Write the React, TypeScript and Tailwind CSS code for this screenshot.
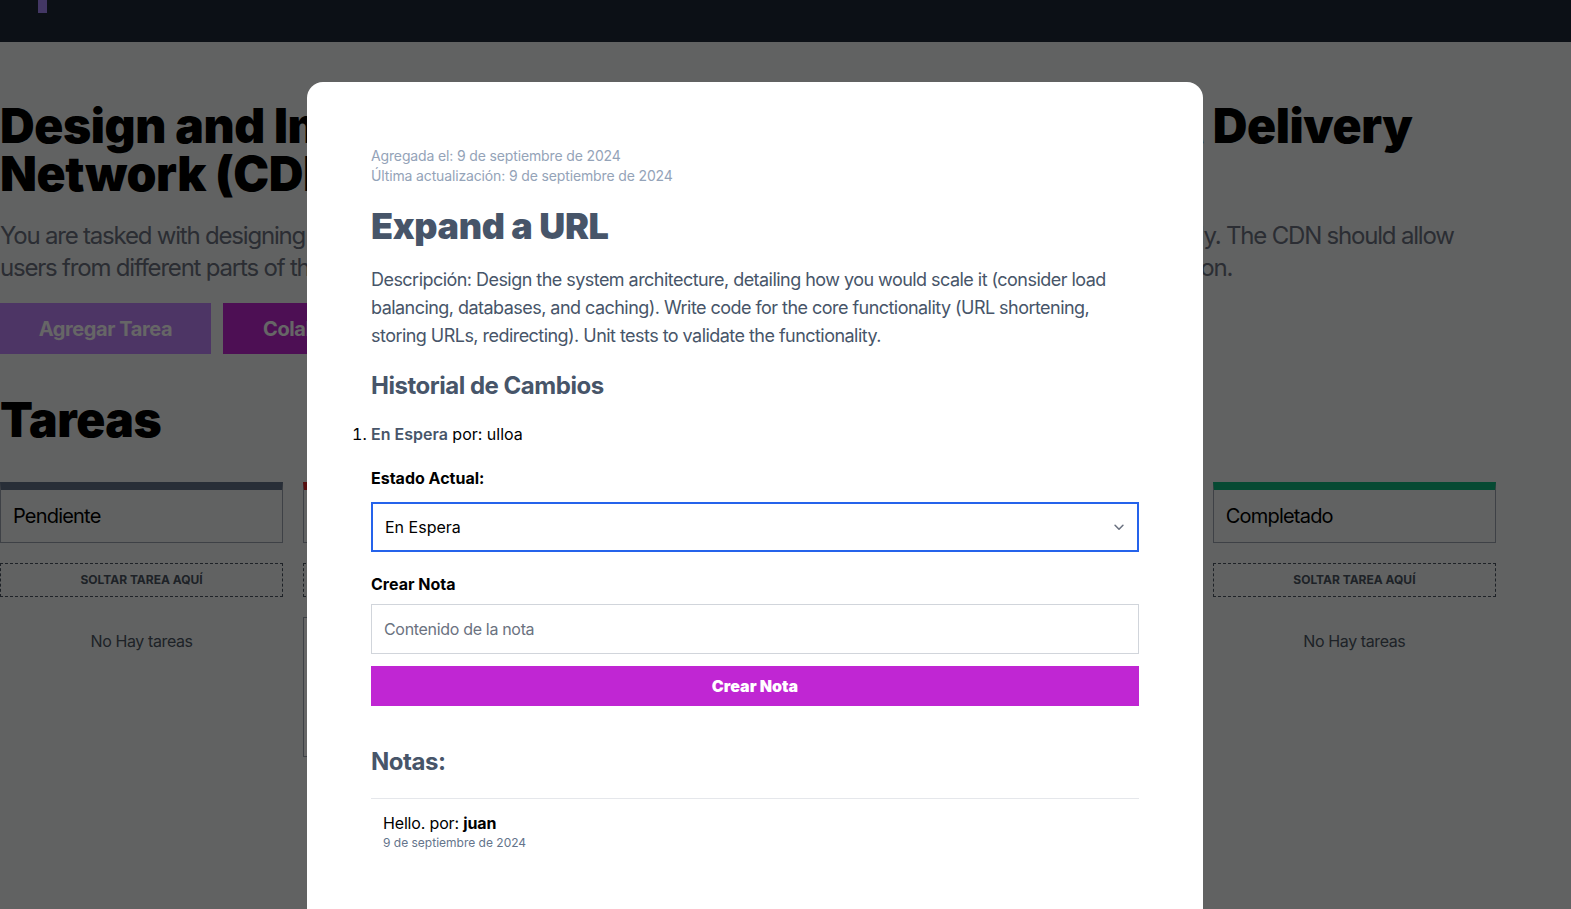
const columns = [
  { name: 'Pendiente', bar: 'border-t-[#64748b]', tasks: [] as string[] },
  { name: 'En Espera', bar: 'border-t-[#dc2626]', tasks: ['Expand a URL'] },
  { name: 'En Progreso', bar: 'border-t-[#f59e0b]', tasks: [] },
  { name: 'En Revisión', bar: 'border-t-[#0ea5e9]', tasks: [] },
  { name: 'Completado', bar: 'border-t-[#10b981]', tasks: [] },
]

function Board() {
  return (
    <div className="min-h-screen bg-[#f2f5f4] tracking-[-0.025em]">
      <header className="h-[42px] bg-[#1f2937]">
        <div className="ml-[38px] h-[13px] w-[9px] bg-[#a78bfa]" />
      </header>

      <main className="w-[1496px] pt-[60px]">
        <h1 className="text-5xl leading-none font-black text-black">
          Design and Implement Scalable and Global Content Delivery Network (CDN)
        </h1>
        <p className="mt-[22px] text-2xl tracking-[-0.05em] text-[#6b7280]">
          You are tasked with designing a Content Delivery Network (CDN) that serves static web content to every user
          efficiently. The CDN should allow users from different parts of the world to access cached content with
          minimal latency and high availability in every region.
        </p>

        <div className="mt-[19px] flex gap-3">
          <button className="h-[51px] w-[211px] bg-[#c084fc] text-xl font-bold text-white">Agregar Tarea</button>
          <button className="h-[51px] px-10 bg-[#c026d3] text-xl font-bold text-white">Colaboradores</button>
        </div>

        <h2 className="mt-[42px] text-5xl leading-none font-black text-black">Tareas</h2>

        <div className="mt-[38px] grid grid-cols-5 gap-5">
          {columns.map((col) => (
            <div key={col.name}>
              <div
                className={`border border-[#9ca3af] border-t-8 ${col.bar} px-3 py-3 text-xl tracking-[-0.04em] text-black`}
              >
                {col.name}
              </div>
              <div className="mt-5 border border-dashed border-[#4b5563] py-2 text-center text-xs font-bold tracking-normal text-[#4b5563] uppercase">
                Soltar tarea aquí
              </div>
              {col.tasks.length === 0 ? (
                <p className="mt-8 text-center text-[#4b5563]">No Hay tareas</p>
              ) : (
                col.tasks.map((t) => (
                  <div key={t} className="mt-5 h-[140px] border border-[#9ca3af] bg-white p-4">
                    <p className="text-xl font-bold">{t}</p>
                  </div>
                ))
              )}
            </div>
          ))}
        </div>
      </main>
    </div>
  )
}

function TaskModal() {
  return (
    <div className="fixed inset-0 overflow-hidden bg-black/60">
      <div className="ml-[307px] mt-[82px] w-[896px] rounded-2xl bg-white px-16 pt-16 pb-16">
        <div className="text-sm tracking-[-0.01em] text-[#94a3b8]">
          <p>Agregada el: 9 de septiembre de 2024</p>
          <p>Última actualización: 9 de septiembre de 2024</p>
        </div>

        <h2 className="mt-5 text-4xl font-black tracking-[-0.01em] text-[#475569]">Expand a URL</h2>
        <p className="mt-5 text-lg tracking-[-0.03em] text-[#475569]">
          Descripción: Design the system architecture, detailing how you would scale it (consider load balancing,
          databases, and caching). Write code for the core functionality (URL shortening, storing URLs, redirecting).
          Unit tests to validate the functionality.
        </p>

        <h3 className="mt-5 text-2xl font-bold tracking-[-0.02em] text-[#475569]">Historial de Cambios</h3>
        <ol className="mt-5 list-decimal list-outside pl-0 marker:text-black">
          <li className="text-black">
            <span className="font-semibold text-[#475569]">En Espera</span> por: ulloa
          </li>
        </ol>

        <label className="mt-5 block font-bold text-black">Estado Actual:</label>
        <div className="relative mt-3">
          <select
            defaultValue="En Espera"
            className="h-[50px] w-full appearance-none border-2 border-[#2563eb] bg-white px-3 text-black outline-none"
          >
            <option>Pendiente</option>
            <option>En Espera</option>
            <option>En Progreso</option>
            <option>En Revisión</option>
            <option>Completado</option>
          </select>
          <svg
            viewBox="0 0 12 8"
            className="pointer-events-none absolute right-[14px] top-[22px] h-[7px] w-[12px] text-[#6b7280]"
            fill="none"
            stroke="currentColor"
            strokeWidth="1.8"
            strokeLinecap="round"
            strokeLinejoin="round"
          >
            <path d="M1.5 1.5 6 6l4.5-4.5" />
          </svg>
        </div>

        <label className="mt-5 block font-bold text-black">Crear Nota</label>
        <input
          placeholder="Contenido de la nota"
          className="mt-2 h-[50px] w-full border border-[#d1d5db] px-3 tracking-[-0.02em] text-black placeholder:text-[#6b7280] outline-none"
        />
        <button className="mt-3 h-10 w-full bg-[#c026d3] font-black text-white">Crear Nota</button>

        <h3 className="mt-10 text-2xl font-bold tracking-[-0.02em] text-[#475569]">Notas:</h3>
        <ul className="mt-5">
          <li className="border-t border-[#e5e7eb] px-3 py-3">
            <p className="tracking-[-0.01em] text-black">
              Hello. por: <span className="font-bold">juan</span>
            </p>
            <p className="text-xs text-[#64748b]">9 de septiembre de 2024</p>
          </li>
        </ul>
      </div>
    </div>
  )
}

export default function App() {
  return (
    <div className="font-['Inter',sans-serif]">
      <Board />
      <TaskModal />
    </div>
  )
}
